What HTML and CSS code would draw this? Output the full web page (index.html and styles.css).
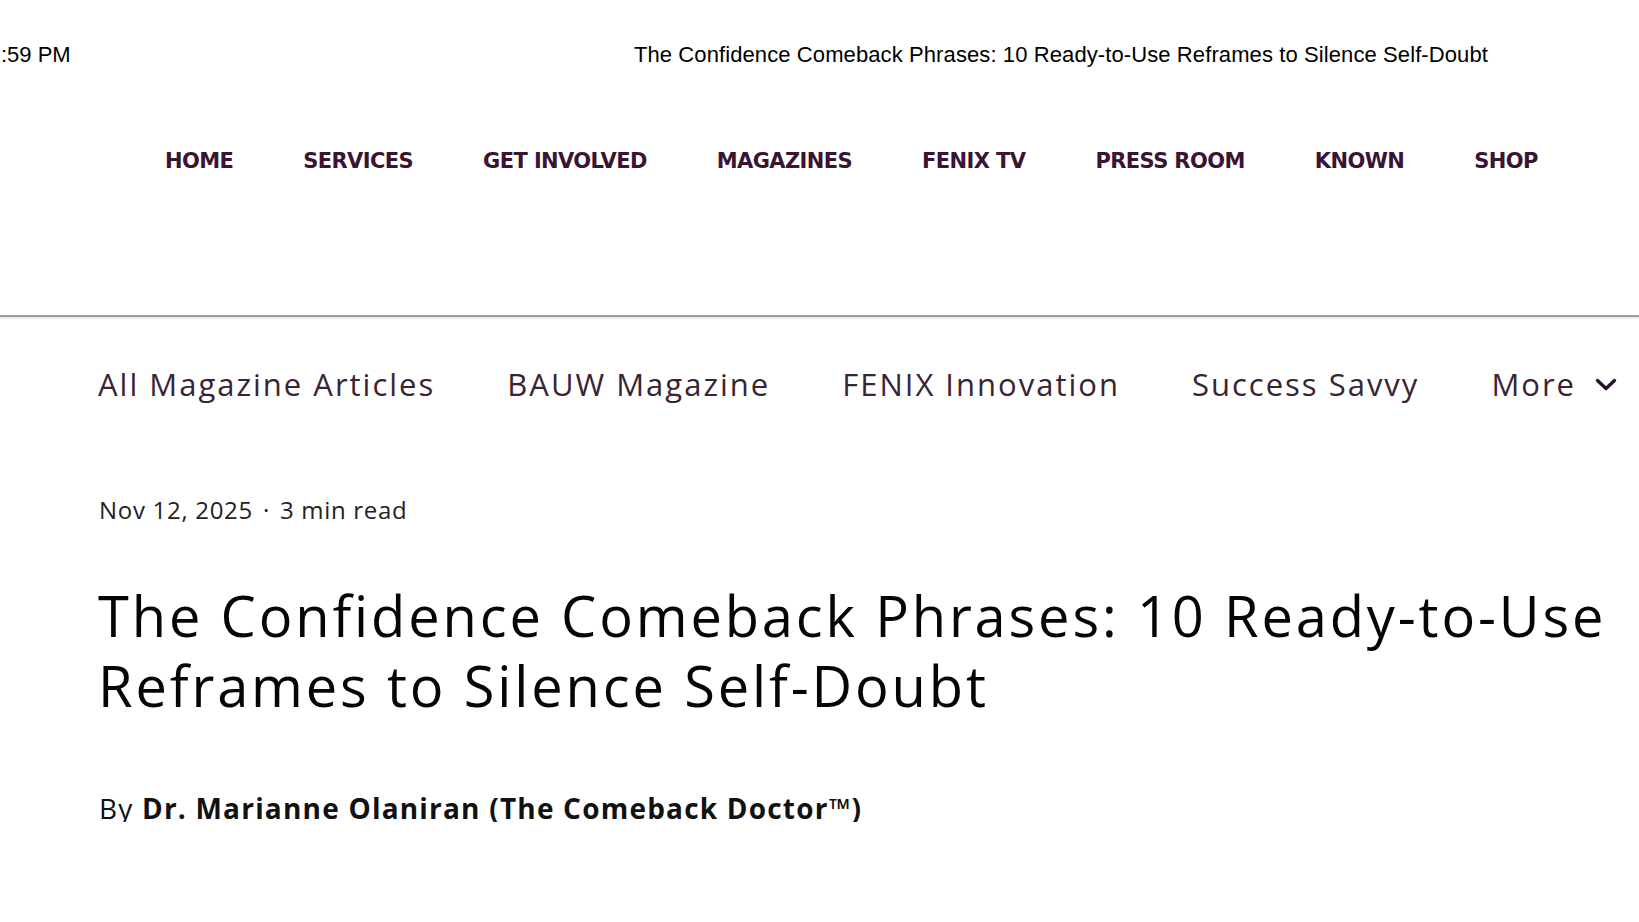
FILE: index.html
```html
<!DOCTYPE html>
<html lang="en">
<head>
<meta charset="utf-8">
<title>The Confidence Comeback Phrases</title>
<link rel="stylesheet" href="styles.css">
</head>
<body>
<header class="site-header">
  <div class="print-bar">
    <span class="print-time">:59 PM</span>
    <span class="print-title">The Confidence Comeback Phrases: 10 Ready-to-Use Reframes to Silence Self-Doubt</span>
  </div>
  <nav class="main-nav">
    <a class="main-link">HOME</a>
    <a class="main-link">SERVICES</a>
    <a class="main-link">GET INVOLVED</a>
    <a class="main-link">MAGAZINES</a>
    <a class="main-link">FENIX TV</a>
    <a class="main-link">PRESS ROOM</a>
    <a class="main-link">KNOWN</a>
    <a class="main-link">SHOP</a>
  </nav>
</header>
<nav class="cat-nav">
  <a class="cat-link">All Magazine Articles</a>
  <a class="cat-link">BAUW Magazine</a>
  <a class="cat-link">FENIX Innovation</a>
  <a class="cat-link">Success Savvy</a>
  <a class="cat-link cat-more">More
    <svg class="chevron" width="22" height="13" viewBox="0 0 22 13"><path d="M2.5 2.5 L11 10.5 L19.5 2.5" fill="none" stroke="#2a1230" stroke-width="3.4" stroke-linecap="round" stroke-linejoin="round"/></svg>
  </a>
</nav>
<article class="post">
  <div class="post-meta"><span>Nov 12, 2025</span><span class="dot">·</span><span>3 min read</span></div>
  <h1 class="post-title">The Confidence Comeback Phrases: 10 Ready-to-Use Reframes to Silence Self-Doubt</h1>
  <p class="byline">By <strong>Dr. Marianne Olaniran (The Comeback Doctor™)</strong></p>
</article>
</body>
</html>
```
FILE: styles.css
```css
html, body {
  margin: 0;
  padding: 0;
  background: #ffffff;
}

body {
  font-family: "Open Sans", sans-serif;
  color: #111;
}

.site-header {
  height: 315px;
  border-bottom: 2px solid #9c9c9c;
  box-shadow: 0 1px 2px rgba(0, 0, 0, 0.15);
}

.print-bar {
  display: flex;
  justify-content: space-between;
  align-items: baseline;
  padding: 44px 151px 0 1px;
  font-family: "Liberation Sans", Arial, sans-serif;
  font-size: 22px;
  line-height: 22px;
  color: #000;
}

.print-title {
  letter-spacing: 0.1px;
}

.main-nav {
  display: flex;
  gap: 70px;
  padding: 84px 0 0 165px;
}

.main-link {
  font-family: "DejaVu Sans", sans-serif;
  font-weight: 700;
  font-size: 21px;
  line-height: 22px;
  color: #3a1430;
  letter-spacing: -0.6px;
}

.cat-nav {
  display: flex;
  gap: 72px;
  padding: 52px 0 0 98px;
}

.cat-link {
  font-size: 31px;
  line-height: 31px;
  letter-spacing: 2px;
  color: #3a2434;
  display: flex;
  align-items: center;
}

.cat-more {
  gap: 19px;
}

.chevron {
  display: block;
}

.post {
  padding: 98px 0 0 99px;
}

.post-meta {
  display: flex;
  gap: 10px;
  font-size: 24px;
  line-height: 24px;
  letter-spacing: 0.7px;
  color: #222;
}

.post-title {
  margin: 58px 0 0 -1px;
  font-size: 56px;
  line-height: 70px;
  font-weight: 400;
  letter-spacing: 2.85px;
  color: #050505;
}

.byline {
  margin: 74px 0 0;
  font-size: 28px;
  line-height: 28px;
  letter-spacing: 1.2px;
  color: #111;
}

.byline strong {
  font-weight: 700;
}
```
